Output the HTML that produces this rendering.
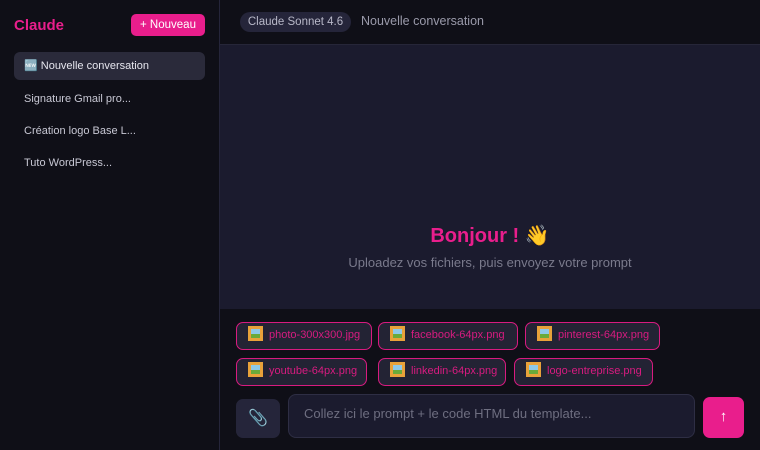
<!DOCTYPE html>
<html><head><meta charset="utf-8"><style>
*{box-sizing:border-box;margin:0;padding:0}
body{width:760px;height:450px;overflow:hidden;background:#0f0f17;font-family:"Liberation Sans",sans-serif;position:relative}
.sb{position:absolute;left:0;top:0;width:220px;height:450px;background:#0f0f17;border-right:1px solid #25253a}
.title{position:absolute;left:14px;top:17px;color:#e91e8c;font-weight:bold;font-size:15px}
.new{position:absolute;left:131px;top:14px;width:74px;height:22px;background:#e91e8c;color:#fff;border-radius:5px;font-size:11.5px;text-align:center;line-height:22px}
.item{position:absolute;left:14px;width:191px;height:28px;padding-left:10px;line-height:28px;font-size:11px;color:#c8c8d4}
.act{background:#2a2a3a;border-radius:6px;color:#e6e6ee}
.hdr{position:absolute;left:220px;top:0;right:0;height:45px;border-bottom:1px solid #262638;background:#0f0f17}
.pill{position:absolute;left:20px;top:12px;height:20px;width:111px;border-radius:10px;background:#25253a;color:#b8b8c8;font-size:11.5px;line-height:20px;text-align:center}
.hc{position:absolute;left:141px;top:14px;color:#9a9aaa;font-size:12.5px}
.main{position:absolute;left:220px;top:45px;right:0;height:264px;background:#1b1b2e}
.hi{position:absolute;left:0;right:0;top:178px;text-align:center;color:#e91e8c;font-weight:bold;font-size:20px}
.sub{position:absolute;left:0;right:0;top:210px;text-align:center;color:#7a7a8c;font-size:13px}
.chip{position:absolute;height:28px;border:1.5px solid #d81b80;border-radius:7px;background:#232334;color:#d81b80;font-size:11px;line-height:25px;padding-left:11px}
.ic{display:inline-block;width:15px;height:15px;background:#e8a23a;vertical-align:-3px;margin-right:6px;position:relative}
.ic:after{content:"";position:absolute;left:3px;top:3px;width:9px;height:9px;background:linear-gradient(#8ec9e8 55%,#6aaa3a 55%)}
.att{position:absolute;left:236px;top:399px;width:44px;height:39px;background:#25253a;border-radius:7px;color:#8fb6cc;text-align:center;line-height:39px;font-size:16px}
.ta{position:absolute;left:288px;top:394px;width:407px;height:44px;background:#1b1b2e;border:1px solid #2e2e44;border-radius:8px;color:#6e6e80;font-size:13px;padding:11px 0 0 15px}
.send{position:absolute;left:703px;top:397px;width:41px;height:41px;background:#e91e8c;border-radius:7px;color:#fff;text-align:center;line-height:40px;font-size:15px}
</style></head><body>
<div class="sb">
<div class="title">Claude</div>
<div class="new">+ Nouveau</div>
<div class="item act" style="top:52px">🆕 Nouvelle conversation</div>
<div class="item" style="top:85px">Signature Gmail pro...</div>
<div class="item" style="top:117px">Création logo Base L...</div>
<div class="item" style="top:149px">Tuto WordPress...</div>
</div>
<div class="hdr"><div class="pill">Claude Sonnet 4.6</div><div class="hc">Nouvelle conversation</div></div>
<div class="main"><div class="hi">Bonjour ! 👋</div><div class="sub">Uploadez vos fichiers, puis envoyez votre prompt</div></div>
<div class="chip" style="left:236px;top:322px;width:136px"><span class="ic"></span>photo-300x300.jpg</div>
<div class="chip" style="left:378px;top:322px;width:140px"><span class="ic"></span>facebook-64px.png</div>
<div class="chip" style="left:525px;top:322px;width:135px"><span class="ic"></span>pinterest-64px.png</div>
<div class="chip" style="left:236px;top:358px;width:131px"><span class="ic"></span>youtube-64px.png</div>
<div class="chip" style="left:378px;top:358px;width:128px"><span class="ic"></span>linkedin-64px.png</div>
<div class="chip" style="left:514px;top:358px;width:139px"><span class="ic"></span>logo-entreprise.png</div>
<div class="att">📎</div>
<div class="ta">Collez ici le prompt + le code HTML du template...</div>
<div class="send">↑</div>
</body></html>
